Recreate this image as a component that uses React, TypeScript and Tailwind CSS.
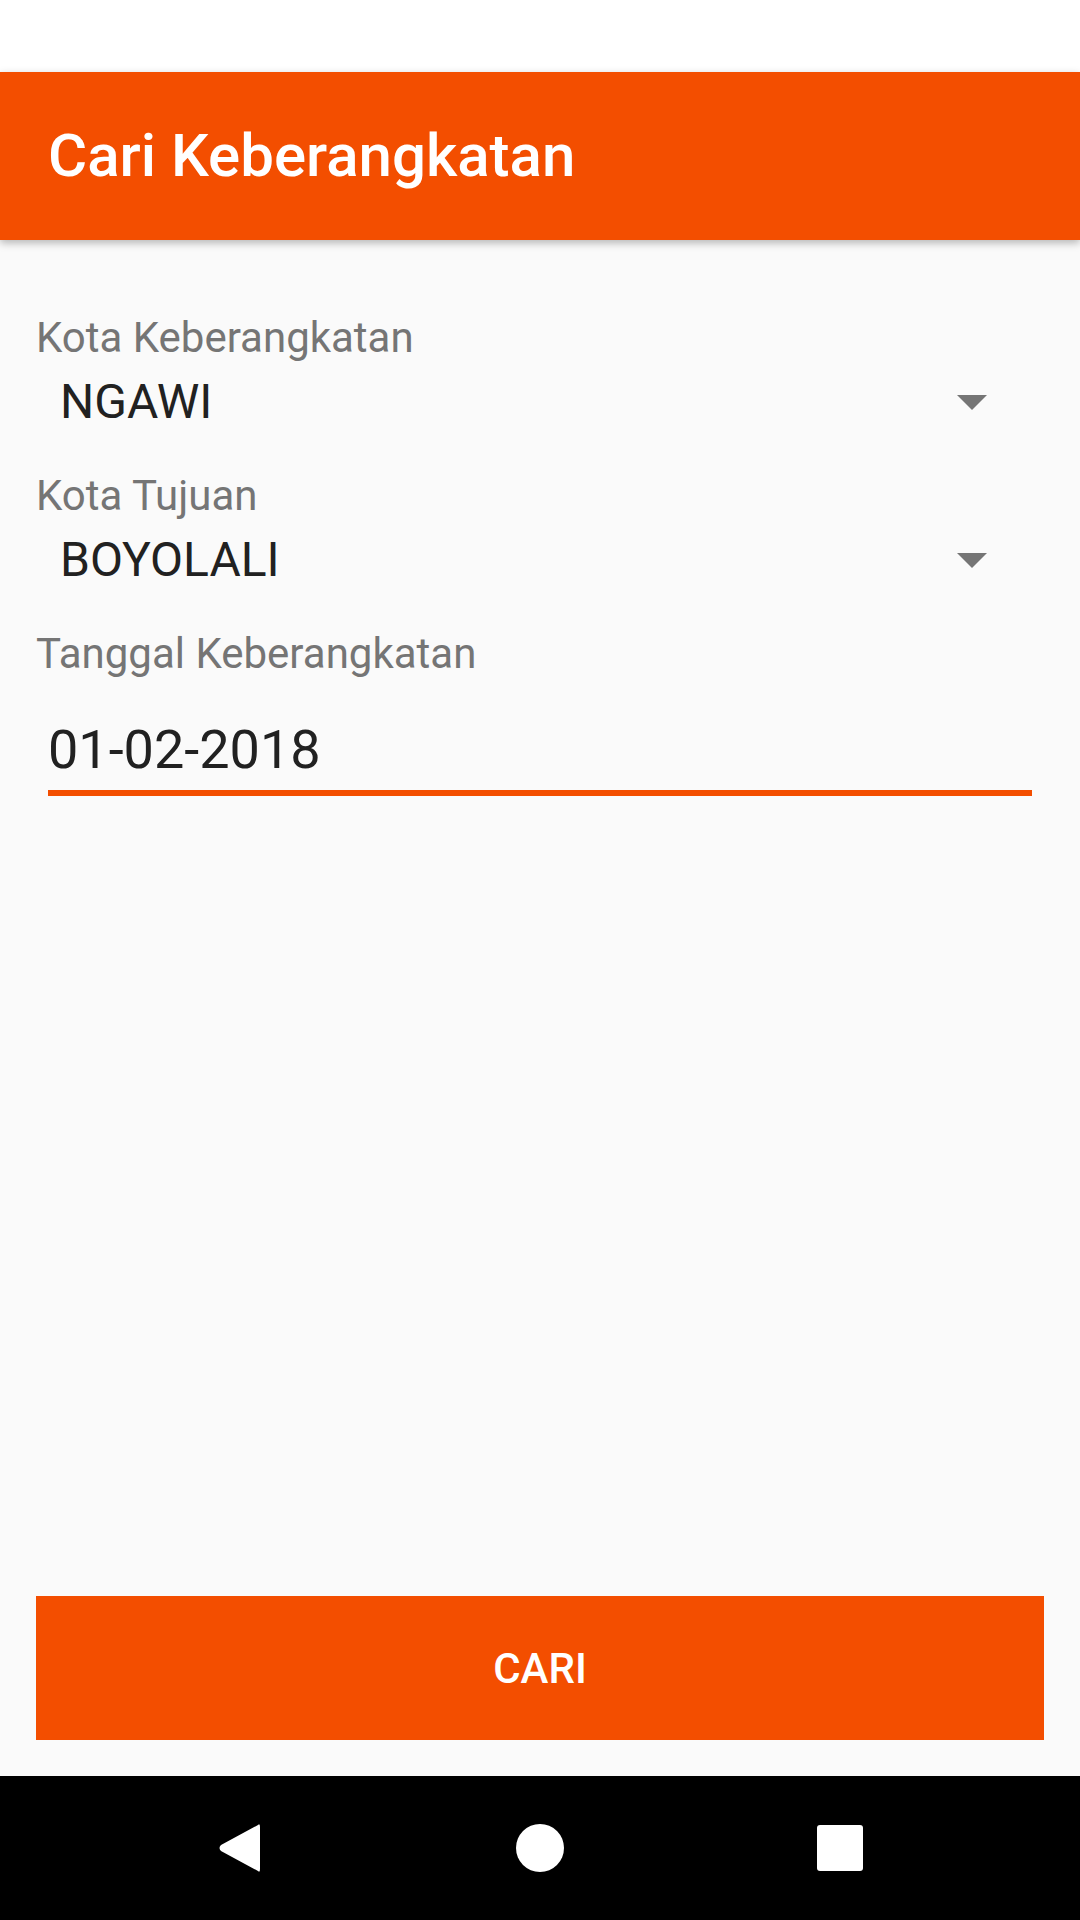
import React from "react";

const roboto = { fontFamily: "Roboto, 'Noto Sans', sans-serif" };

function SpinnerRow({ value }: { value: string }) {
  return (
    <div className="flex h-[64px] items-center justify-between mt-[4px]">
      <span className="pl-[24px] text-[48px] leading-[64px] text-[#212121]">{value}</span>
      <svg width="30" height="15" viewBox="0 0 30 15" className="mr-[57px]">
        <path d="M0 0 L30 0 L15 15 Z" fill="#757575" />
      </svg>
    </div>
  );
}

function Label({ text, top }: { text: string; top: string }) {
  return <div className={`${top} text-[42px] leading-[56px] text-[#757575]`}>{text}</div>;
}

export default function App() {
  return (
    <div className="w-[1080px] h-[1920px] flex flex-col bg-[#FAFAFA] overflow-hidden" style={roboto}>
      {/* status bar */}
      <div className="h-[72px] shrink-0 bg-white" />

      {/* app bar */}
      <div className="relative z-10 h-[168px] shrink-0 flex items-center pl-[48px] bg-[#F34E00] shadow-[0_3px_8px_rgba(0,0,0,0.28)]">
        <h1 className="text-[60px] font-medium text-white leading-none">Cari Keberangkatan</h1>
      </div>

      {/* form */}
      <div className="flex-1 flex flex-col px-[36px]">
        <Label text="Kota Keberangkatan" top="mt-[70px]" />
        <SpinnerRow value="NGAWI" />

        <Label text="Kota Tujuan" top="mt-[34px]" />
        <SpinnerRow value="BOYOLALI" />

        <Label text="Tanggal Keberangkatan" top="mt-[34px]" />
        <div className="mx-[12px] mt-[36px]">
          <div className="text-[54px] leading-[64px] text-[#212121]">01-02-2018</div>
          <div className="mt-[8px] h-[6px] bg-[#F34E00]" />
        </div>

        <div className="flex-1" />

        <button className="h-[144px] mb-[36px] bg-[#F34E00] text-white text-[42px] font-medium">
          CARI
        </button>
      </div>

      {/* nav bar */}
      <div className="h-[144px] shrink-0 bg-black flex items-center">
        <div className="flex-1 flex justify-center">
          <svg width="44" height="50" viewBox="0 0 44 50" className="ml-[-36px]">
            <path d="M40 2 Q42 0 42 4 L42 46 Q42 50 40 48 L3 28 Q0 25 3 22 Z" fill="#fff" />
          </svg>
        </div>
        <div className="w-[48px] h-[48px] rounded-full bg-white" />
        <div className="flex-1 flex justify-center">
          <div className="w-[46px] h-[46px] rounded-[3px] bg-white ml-[36px]" />
        </div>
      </div>
    </div>
  );
}
